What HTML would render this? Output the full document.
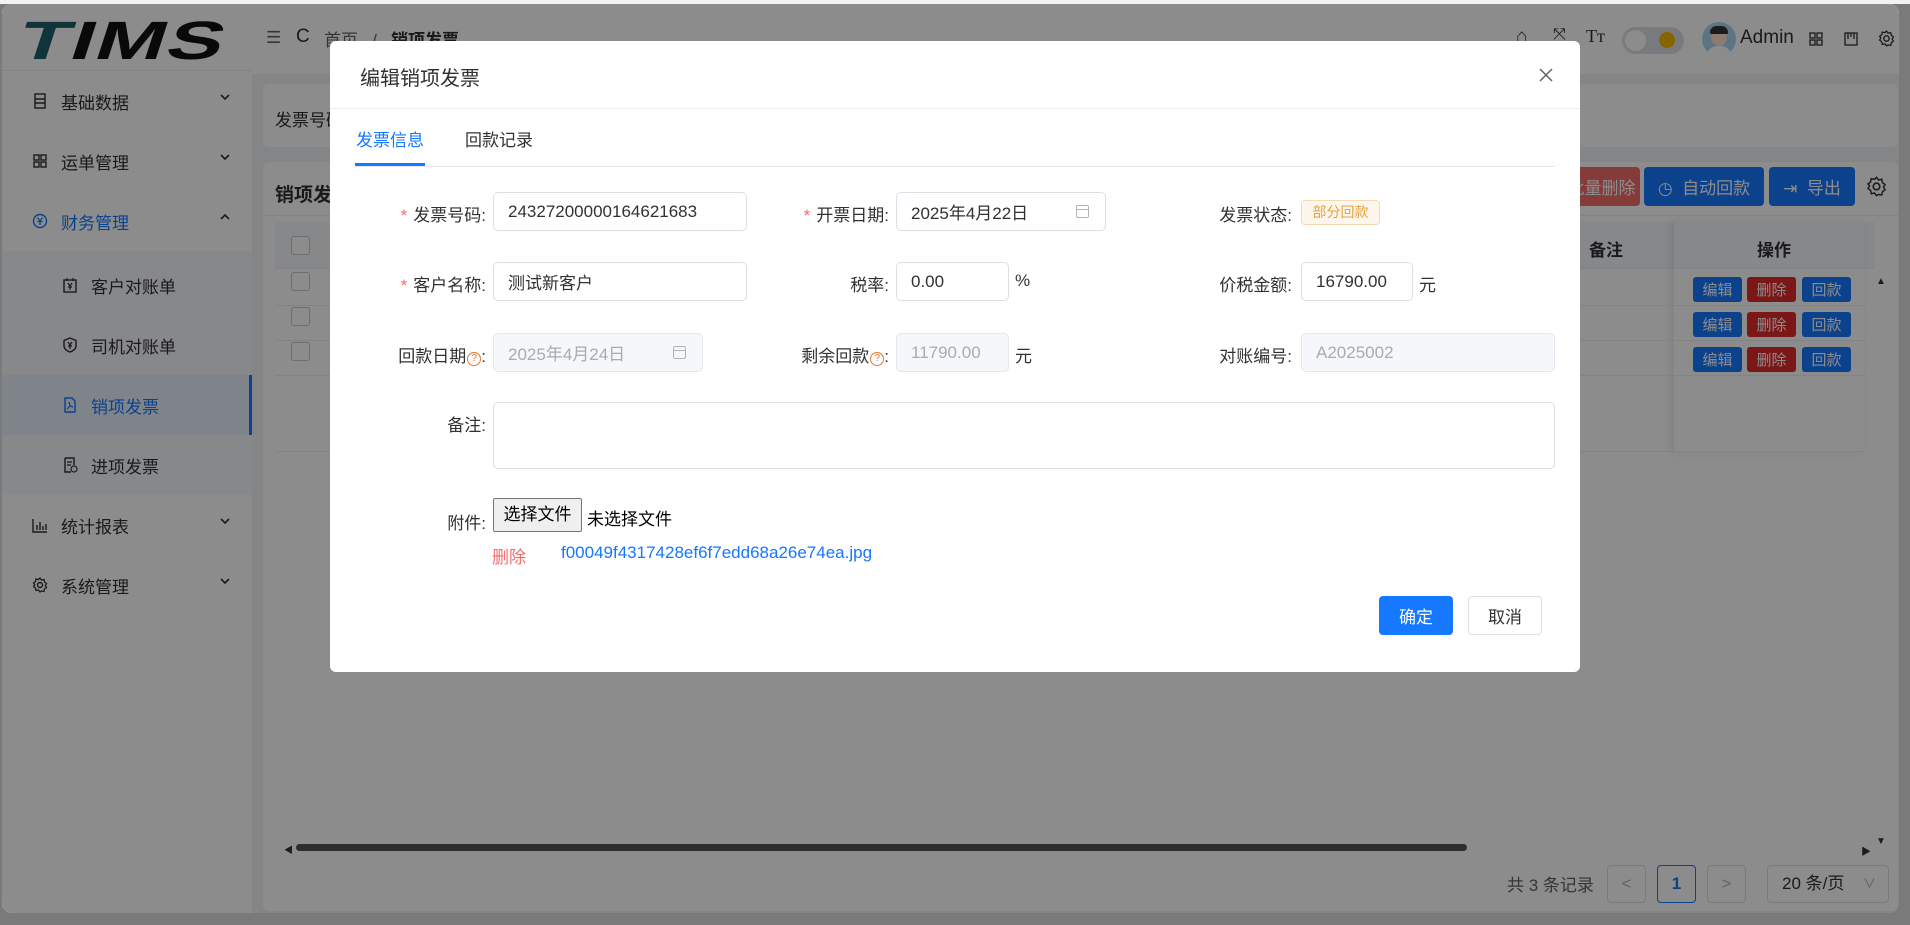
<!DOCTYPE html>
<html><head><meta charset="utf-8"><style>
*{box-sizing:border-box;margin:0;padding:0}
body{width:1910px;height:925px;overflow:hidden;background:#7a7a7a;font-family:"Liberation Sans","Noto Sans CJK SC",sans-serif;color:#303133;font-size:17px;position:relative}
.topstrip{position:absolute;left:0;top:0;width:1910px;height:4px;background:#f2f2f2}
.app{position:absolute;left:2px;top:4px;width:1897px;height:909px;border-radius:10px;overflow:hidden;background:#f0f2f5}
.a{position:absolute}
.side{left:0;top:0;width:250px;height:909px;background:#fff}
.menu{position:absolute;left:0;width:250px;height:60px;display:flex;align-items:center;font-size:17px;color:#303133}
.menu .ic{position:absolute;left:30px;top:22px;width:16px;height:16px}
.menu .t{position:absolute;left:59px}
.menu .chev{position:absolute;left:216px;top:19px}
.sub .ic{left:60px}.sub .t{left:89px}
.hdr{left:250px;top:0;width:1647px;height:70px;background:#fff}
.card{background:#fff;border-radius:6px}
.btn{position:absolute;border-radius:4px;color:#fff;font-size:17px;display:flex;align-items:center;justify-content:center}
.sbtn{position:absolute;width:49px;height:25px;border-radius:3px;color:#fff;font-size:15px;display:flex;align-items:center;justify-content:center}
.cb{position:absolute;left:288px;width:19px;height:19px;border:1px solid #c8c9cc;border-radius:3px;background:#fff}
.mask{position:absolute;left:0;top:0;width:1897px;height:909px;background:rgba(0,0,0,0.45)}
.dlg{position:absolute;left:330px;top:41px;width:1250px;height:631px;background:#fff;border-radius:6px}
.lbl{position:absolute;font-size:17px;color:#303133;text-align:right;white-space:nowrap}
.star{color:#f56c6c;margin-right:6px}
.inp{position:absolute;height:39px;border:1px solid #dcdfe6;border-radius:5px;padding-left:14px;display:flex;align-items:center;font-size:17px;color:#303133;background:#fff}
.dis{background:#f5f7fa;color:#a8abb2;border-color:#e4e7ed}
.q{display:inline-block;width:14px;height:14px;border:1.5px solid #e6762e;border-radius:50%;font-size:10px;line-height:11px;text-align:center;color:#e6762e;vertical-align:1px;margin-left:1px}
.cal{position:absolute;right:16px;top:12px;width:13px;height:13px;border:1.3px solid #b0b3b8;border-radius:2px}
.cal:before{content:"";position:absolute;left:0;right:0;top:3px;border-top:1.3px solid #b0b3b8}
</style></head><body>
<div class="topstrip"></div>
<div class="app">
 <div class="a side">
  <div class="a" style="left:18px;top:6px;font:900 54px 'Liberation Sans',sans-serif;letter-spacing:1px;transform:skewX(-18deg) scaleX(1.55);transform-origin:left;color:#111"><span style="color:#1f5f6a">T</span>IMS</div>
  <div class="a" style="left:0;top:66px;width:250px;height:1px;background:#eee"></div>
  <div class="menu" style="top:67px"><svg class="ic" viewBox="0 0 16 16"><rect x="3" y="1" width="10" height="14" fill="none" stroke="#303133" stroke-width="1.4"/><path d="M3 6h10M3 10h10" stroke="#303133" stroke-width="1.4"/></svg><span class="t">基础数据</span><svg class="chev" width="14" height="14" viewBox="0 0 14 14"><path d="M3 5l4 4 4-4" fill="none" stroke="#303133" stroke-width="1.6"/></svg></div>
  <div class="menu" style="top:127px"><svg class="ic" viewBox="0 0 16 16"><g fill="none" stroke="#303133" stroke-width="1.4"><rect x="2" y="2" width="5" height="5"/><rect x="9" y="2" width="5" height="5"/><rect x="2" y="9" width="5" height="5"/><rect x="9" y="9" width="5" height="5"/></g></svg><span class="t">运单管理</span><svg class="chev" width="14" height="14" viewBox="0 0 14 14"><path d="M3 5l4 4 4-4" fill="none" stroke="#303133" stroke-width="1.6"/></svg></div>
  <div class="menu" style="top:187px;color:#1677ff"><svg class="ic" viewBox="0 0 16 16"><circle cx="8" cy="8" r="6.5" fill="none" stroke="#1677ff" stroke-width="1.4"/><path d="M5.5 4.5L8 8l2.5-3.5M8 8v4M5.5 8.5h5" fill="none" stroke="#1677ff" stroke-width="1.2"/></svg><span class="t">财务管理</span><svg class="chev" width="14" height="14" viewBox="0 0 14 14"><path d="M3 9l4-4 4 4" fill="none" stroke="#303133" stroke-width="1.6"/></svg></div>
  <div class="a" style="left:0;top:247px;width:250px;height:244px;background:#f6f7f9"></div>
  <div class="menu sub" style="top:251px"><svg class="ic" viewBox="0 0 16 16"><rect x="2" y="3" width="12" height="12" fill="none" stroke="#303133" stroke-width="1.4"/><path d="M5 1v3M11 1v3M6 6l2 3 2-3M8 9v4M6 10h4" fill="none" stroke="#303133" stroke-width="1.2"/></svg><span class="t">客户对账单</span></div>
  <div class="menu sub" style="top:311px"><svg class="ic" viewBox="0 0 16 16"><path d="M8 1l6 2.5v5C14 12 11 14 8 15 5 14 2 12 2 8.5v-5z" fill="none" stroke="#303133" stroke-width="1.4"/><path d="M6 5l2 3 2-3M8 8v4M6 9h4" fill="none" stroke="#303133" stroke-width="1.2"/></svg><span class="t">司机对账单</span></div>
  <div class="a" style="left:0;top:371px;width:250px;height:60px;background:#e6f0fc;border-right:3px solid #1677ff"></div>
  <div class="menu sub" style="top:371px;color:#1677ff"><svg class="ic" viewBox="0 0 16 16"><path d="M3 1h7l3 3v11H3z" fill="none" stroke="#1677ff" stroke-width="1.4"/><path d="M7 5l1 4-3 3M8 9l3 1" fill="none" stroke="#1677ff" stroke-width="1.2"/></svg><span class="t">销项发票</span></div>
  <div class="menu sub" style="top:431px"><svg class="ic" viewBox="0 0 16 16"><path d="M3 1h9v7M3 1v14h6" fill="none" stroke="#303133" stroke-width="1.4"/><circle cx="12" cy="12" r="3" fill="none" stroke="#303133" stroke-width="1.2"/><path d="M5 5h5M5 8h4" stroke="#303133" stroke-width="1.2"/></svg><span class="t">进项发票</span></div>
  <div class="menu" style="top:491px"><svg class="ic" viewBox="0 0 16 16"><path d="M1 2v13h14M5 8v5M8 5v8M11 9v4M14 7v6" fill="none" stroke="#303133" stroke-width="1.4"/></svg><span class="t">统计报表</span><svg class="chev" width="14" height="14" viewBox="0 0 14 14"><path d="M3 5l4 4 4-4" fill="none" stroke="#303133" stroke-width="1.6"/></svg></div>
  <div class="menu" style="top:551px"><svg class="ic" viewBox="0 0 16 16"><circle cx="8" cy="8" r="2.5" fill="none" stroke="#303133" stroke-width="1.4"/><path d="M8 1l1.5 2 2.5-.5.5 2.5 2 1.5-1.2 2 1.2 2-2 1.5-.5 2.5-2.5-.5L8 15l-1.5-2-2.5.5-.5-2.5-2-1.5 1.2-2L1.5 6l2-1.5.5-2.5 2.5.5z" fill="none" stroke="#303133" stroke-width="1.3"/></svg><span class="t">系统管理</span><svg class="chev" width="14" height="14" viewBox="0 0 14 14"><path d="M3 5l4 4 4-4" fill="none" stroke="#303133" stroke-width="1.6"/></svg></div>
 </div>
 <div class="a hdr">
  <div class="a" style="left:14px;top:24px;font-size:17px;color:#606266">☰</div>
  <div class="a" style="left:44px;top:22px;font-size:19px;color:#303133">C</div>
  <div class="a" style="left:72px;top:22px;color:#606266">首页 &nbsp;&nbsp;/ &nbsp;&nbsp;<b style="color:#303133">销项发票</b></div>
  <div class="a" style="left:1264px;top:22px;font-size:19px;color:#303133">⌂</div>
  <div class="a" style="left:1301px;top:22px;font-size:16px;color:#303133">⤧</div>
  <div class="a" style="left:1334px;top:22px;font-size:18px;color:#303133;font-family:'Liberation Serif',serif">Tт</div>
  <div class="a" style="left:1370px;top:23px;width:62px;height:27px;border-radius:14px;background:#dcdfe6"><div class="a" style="left:3px;top:3px;width:21px;height:21px;border-radius:50%;background:#fff"></div><div class="a" style="left:37px;top:5px;width:16px;height:16px;border-radius:50%;background:#f5b800"></div></div>
  <div class="a" style="left:1450px;top:18px;width:34px;height:34px;border-radius:50%;background:#a8d4f0;overflow:hidden"><div class="a" style="left:9px;top:6px;width:16px;height:18px;border-radius:50%;background:#fde0cc"></div><div class="a" style="left:8px;top:4px;width:18px;height:8px;border-radius:8px 8px 2px 2px;background:#333"></div><div class="a" style="left:5px;top:24px;width:24px;height:12px;border-radius:10px 10px 0 0;background:#fff"></div></div>
  <div class="a" style="left:1488px;top:23px;font-size:19px;color:#303133">Admin</div>
  <svg class="a" style="left:1557px;top:28px" width="14" height="14" viewBox="0 0 14 14"><g fill="none" stroke="#303133" stroke-width="1.3"><rect x="1" y="1" width="5" height="5"/><rect x="8" y="1" width="5" height="5"/><rect x="1" y="8" width="5" height="5"/><rect x="8" y="8" width="5" height="5"/></g></svg>
  <svg class="a" style="left:1592px;top:28px" width="14" height="14" viewBox="0 0 14 14"><rect x="1" y="1" width="12" height="12" fill="none" stroke="#303133" stroke-width="1.3"/><path d="M4 1v6M7 1v4M10 1v6" stroke="#303133" stroke-width="1.3"/></svg>
  <svg class="a" style="left:1626px;top:26px" width="17" height="17" viewBox="0 0 16 16"><circle cx="8" cy="8" r="2.5" fill="none" stroke="#303133" stroke-width="1.3"/><path d="M8 1l1.5 2 2.5-.5.5 2.5 2 1.5-1.2 2 1.2 2-2 1.5-.5 2.5-2.5-.5L8 15l-1.5-2-2.5.5-.5-2.5-2-1.5 1.2-2L1.5 6l2-1.5.5-2.5 2.5.5z" fill="none" stroke="#303133" stroke-width="1.2"/></svg>
 </div>
 <div class="a card" style="left:261px;top:80px;width:1635px;height:63px"><div class="a" style="left:12px;top:22px">发票号码</div></div>
 <div class="a card" style="left:261px;top:158px;width:1635px;height:749px">
  <div class="a" style="left:12px;top:18px;font-size:19px;font-weight:bold">销项发票</div>
  <div class="btn" style="left:1300px;top:5px;width:77px;height:39px;background:#f56c6c">批量删除</div>
  <div class="btn" style="left:1381px;top:5px;width:120px;height:39px;background:#1677ff">◷&nbsp; 自动回款</div>
  <div class="btn" style="left:1506px;top:5px;width:86px;height:39px;background:#1677ff">⇥&nbsp; 导出</div>
  <svg class="a" style="left:1603px;top:14px" width="21" height="21" viewBox="0 0 16 16"><circle cx="8" cy="8" r="2.5" fill="none" stroke="#303133" stroke-width="1.2"/><path d="M8 1l1.5 2 2.5-.5.5 2.5 2 1.5-1.2 2 1.2 2-2 1.5-.5 2.5-2.5-.5L8 15l-1.5-2-2.5.5-.5-2.5-2-1.5 1.2-2L1.5 6l2-1.5.5-2.5 2.5.5z" fill="none" stroke="#303133" stroke-width="1.1"/></svg>
  <div class="a" style="left:0;top:53px;width:1635px;height:1px;background:#ebeef5"></div>
  <div class="a" style="left:12px;top:60px;width:1600px;height:47px;background:#f5f7fa;border-bottom:1px solid #ebeef5"></div>
  <div class="a" style="left:1326px;top:74px;font-weight:bold">备注</div>
  <div class="a" style="left:1411px;top:60px;width:190px;height:230px;background:#fff;box-shadow:-4px 0 8px rgba(0,0,0,.08)"></div>
  <div class="a" style="left:1411px;top:60px;width:190px;height:47px;background:#f5f7fa;border-bottom:1px solid #ebeef5"></div>
  <div class="a" style="left:1494px;top:74px;font-weight:bold">操作</div>
  <div class="a" style="left:12px;top:143px;width:1590px;height:1px;background:#ebeef5"></div>
  <div class="a" style="left:12px;top:178px;width:1590px;height:1px;background:#ebeef5"></div>
  <div class="a" style="left:12px;top:213px;width:1590px;height:1px;background:#ebeef5"></div>
  <div class="a" style="left:12px;top:289px;width:1590px;height:1px;background:#ebeef5"></div>
  <div class="sbtn" style="left:1430px;top:115px;background:#1677ff">编辑</div><div class="sbtn" style="left:1484px;top:115px;background:#e02b2b">删除</div><div class="sbtn" style="left:1539px;top:115px;background:#1677ff">回款</div>
  <div class="sbtn" style="left:1430px;top:150px;background:#1677ff">编辑</div><div class="sbtn" style="left:1484px;top:150px;background:#e02b2b">删除</div><div class="sbtn" style="left:1539px;top:150px;background:#1677ff">回款</div>
  <div class="sbtn" style="left:1430px;top:185px;background:#1677ff">编辑</div><div class="sbtn" style="left:1484px;top:185px;background:#e02b2b">删除</div><div class="sbtn" style="left:1539px;top:185px;background:#1677ff">回款</div>
  <div class="a" style="left:1613px;top:114px;font-size:10px;color:#333">▲</div>
  <div class="a" style="left:1613px;top:674px;font-size:10px;color:#333">▼</div>
  <div class="a" style="left:21px;top:681px;font-size:9px;color:#333">◀</div>
  <div class="a" style="left:33px;top:682px;width:1171px;height:7px;border-radius:4px;background:#555"></div>
  <div class="a" style="left:1598px;top:681px;font-size:10px;color:#333">▶</div>
  <div class="a" style="left:1244px;top:709px;color:#606266">共 3 条记录</div>
  <div class="a" style="left:1344px;top:703px;width:39px;height:38px;border:1px solid #dcdfe6;border-radius:4px;color:#b0b3b8;text-align:center;line-height:36px">&lt;</div>
  <div class="a" style="left:1394px;top:703px;width:39px;height:38px;border:1.5px solid #1677ff;border-radius:4px;color:#1677ff;text-align:center;line-height:35px;font-weight:bold">1</div>
  <div class="a" style="left:1444px;top:703px;width:39px;height:38px;border:1px solid #dcdfe6;border-radius:4px;color:#b0b3b8;text-align:center;line-height:36px">&gt;</div>
  <div class="a" style="left:1504px;top:703px;width:122px;height:38px;border:1px solid #dcdfe6;border-radius:4px;padding-left:14px;line-height:36px">20 条/页<span style="position:absolute;right:12px;color:#a8abb2;font-size:13px">∨</span></div>
 </div>
 <div class="cb" style="left:289px;top:232px"></div><div class="cb" style="left:289px;top:268px"></div><div class="cb" style="left:289px;top:303px"></div><div class="cb" style="left:289px;top:338px"></div>
 <div class="mask"></div>
</div>
<div class="dlg">
 <div class="a" style="left:30px;top:21px;font-size:20px;color:#303133">编辑销项发票</div>
 <svg class="a" style="left:1209px;top:27px" width="14" height="14" viewBox="0 0 14 14"><path d="M1 1l12 12M13 1L1 13" stroke="#606266" stroke-width="1.5"/></svg>
 <div class="a" style="left:0;top:67px;width:1250px;height:1px;background:#ebeef5"></div>
 <div class="a" style="left:26px;top:85px;font-size:17px;color:#1677ff">发票信息</div>
 <div class="a" style="left:135px;top:85px;font-size:17px;color:#303133">回款记录</div>
 <div class="a" style="left:25px;top:122px;width:70px;height:3px;background:#1677ff"></div>
 <div class="a" style="left:25px;top:125px;width:1200px;height:1px;background:#e4e7ed"></div>

 <div class="lbl" style="right:1094px;top:160px"><span class="star">*</span>发票号码:</div>
 <div class="inp" style="left:163px;top:151px;width:254px">24327200000164621683</div>
 <div class="lbl" style="right:691px;top:160px"><span class="star">*</span>开票日期:</div>
 <div class="inp" style="left:566px;top:151px;width:210px">2025年4月22日<span class="cal"></span></div>
 <div class="lbl" style="right:288px;top:160px">发票状态:</div>
 <div class="a" style="left:971px;top:159px;width:79px;height:25px;border:1px solid #f5dab1;background:#fdf6ec;color:#e6a23c;border-radius:4px;font-size:14px;text-align:center;line-height:23px">部分回款</div>

 <div class="lbl" style="right:1094px;top:230px"><span class="star">*</span>客户名称:</div>
 <div class="inp" style="left:163px;top:221px;width:254px">测试新客户</div>
 <div class="lbl" style="right:691px;top:230px">税率:</div>
 <div class="inp" style="left:566px;top:221px;width:113px">0.00</div>
 <div class="a" style="left:685px;top:230px">%</div>
 <div class="lbl" style="right:288px;top:230px">价税金额:</div>
 <div class="inp" style="left:971px;top:221px;width:112px">16790.00</div>
 <div class="a" style="left:1089px;top:230px">元</div>

 <div class="lbl" style="right:1094px;top:301px">回款日期<span class="q">?</span>:</div>
 <div class="inp dis" style="left:163px;top:292px;width:210px">2025年4月24日<span class="cal"></span></div>
 <div class="lbl" style="right:691px;top:301px">剩余回款<span class="q">?</span>:</div>
 <div class="inp dis" style="left:566px;top:292px;width:113px">11790.00</div>
 <div class="a" style="left:685px;top:301px">元</div>
 <div class="lbl" style="right:288px;top:301px">对账编号:</div>
 <div class="inp dis" style="left:971px;top:292px;width:254px">A2025002</div>

 <div class="lbl" style="right:1094px;top:370px">备注:</div>
 <div class="a" style="left:163px;top:361px;width:1062px;height:67px;border:1px solid #dcdfe6;border-radius:5px"></div>

 <div class="lbl" style="right:1094px;top:468px">附件:</div>
 <div class="a" style="left:163px;top:457px;width:89px;height:34px;border:1px solid #767676;border-radius:2px;background:#efefef;font-size:17px;text-align:center;line-height:32px;color:#000">选择文件</div>
 <div class="a" style="left:257px;top:464px;color:#000">未选择文件</div>
 <div class="a" style="left:162px;top:502px;color:#f56c6c">删除</div>
 <div class="a" style="left:231px;top:502px;color:#1677ff">f00049f4317428ef6f7edd68a26e74ea.jpg</div>

 <div class="btn" style="left:1049px;top:555px;width:74px;height:39px;background:#1677ff">确定</div>
 <div class="btn" style="left:1138px;top:555px;width:74px;height:39px;background:#fff;border:1px solid #dcdfe6;color:#303133">取消</div>
</div>
</body></html>
